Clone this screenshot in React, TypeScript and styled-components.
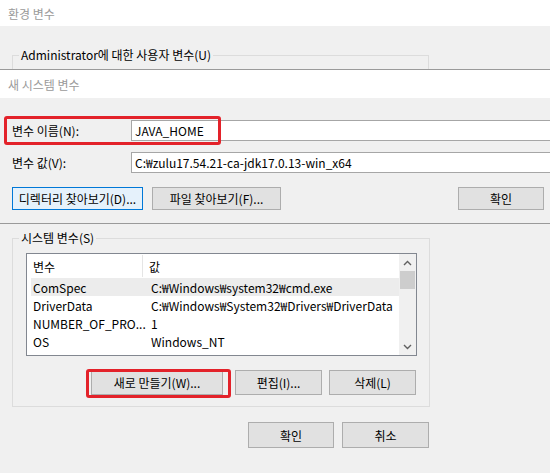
import React from "react";
import styled, { createGlobalStyle } from "styled-components";

const Global = createGlobalStyle`
  html, body { margin: 0; padding: 0; background: #f0f0f0; }
  body {
    font-family: "Noto Sans CJK KR", "Noto Sans", sans-serif;
    font-size: 12px;
    color: #000;
  }
  * { box-sizing: border-box; }
`;

const Screen = styled.div`
  position: relative;
  width: 550px;
  height: 473px;
  overflow: hidden;
  display: flex;
  flex-direction: column;
  background: #f0f0f0;
`;

const TitleBar = styled.div<{ $h: number }>`
  flex-shrink: 0;
  height: ${(p) => p.$h}px;
  background: #fff;
  color: #9a9a9a;
  display: flex;
  align-items: center;
  padding-left: 8px;
  font-size: 12px;
`;

const TopStrip = styled.div`
  flex-shrink: 0;
  height: 43px;
  overflow: hidden;
  padding: 21px 0 0 12px;
`;

const GroupBox = styled.fieldset<{ $w: number; $h: number }>`
  margin: 0;
  width: ${(p) => p.$w}px;
  height: ${(p) => p.$h}px;
  border: 1px solid #dcdcdc;
  padding: 0 0 0 6px;
  min-width: 0;
`;

const Legend = styled.legend`
  padding: 0 2px;
  line-height: 16px;
  font-size: 12px;
`;

const Dialog = styled.section`
  flex-shrink: 0;
  border-top: 1px solid #9a9a9a;
  border-bottom: 1px solid #9a9a9a;
  display: flex;
  flex-direction: column;
`;

const DialogBody = styled.div`
  position: relative;
  height: 125px;
  overflow: hidden;
  padding: 22px 0 0 12px;
  display: flex;
  flex-direction: column;
`;

const FieldRow = styled.div<{ $mt: number }>`
  display: flex;
  align-items: center;
  height: 21px;
  margin-top: ${(p) => p.$mt}px;
`;

const FieldLabel = styled.label`
  width: 119px;
  flex-shrink: 0;
  white-space: nowrap;
`;

const TextBox = styled.div`
  flex-shrink: 0;
  width: 440px;
  height: 21px;
  background: #fff;
  border: 1px solid #a6a6a6;
  display: flex;
  align-items: center;
  padding-left: 3px;
  white-space: nowrap;
`;

const ButtonRow = styled.div<{ $mt: number; $pr: number }>`
  display: flex;
  align-items: center;
  margin-top: ${(p) => p.$mt}px;
  padding-right: ${(p) => p.$pr}px;
`;

const Button = styled.button<{ $w: number; $h: number; $focus?: boolean; $ml?: number; $auto?: boolean }>`
  flex-shrink: 0;
  width: ${(p) => p.$w}px;
  height: ${(p) => p.$h}px;
  margin: 0;
  margin-left: ${(p) => (p.$auto ? "auto" : `${p.$ml ?? 0}px`)};
  padding: 0;
  font: inherit;
  color: #000;
  background: ${(p) => (p.$focus ? "#e5f1fb" : "#e1e1e1")};
  border: 1px solid ${(p) => (p.$focus ? "#0078d7" : "#adadad")};
  border-radius: 0;
  white-space: nowrap;
`;

const Highlight = styled.div<{ $x: number; $y: number; $w: number; $h: number }>`
  position: absolute;
  left: ${(p) => p.$x}px;
  top: ${(p) => p.$y}px;
  width: ${(p) => p.$w}px;
  height: ${(p) => p.$h}px;
  border: 3px solid #e3222a;
  border-radius: 3px;
  pointer-events: none;
`;

const Lower = styled.div`
  flex: 1;
  display: flex;
  flex-direction: column;
  padding: 6px 0 0 12px;
`;

const GroupInner = styled.div`
  display: flex;
  flex-direction: column;
  padding: 7px 0 0 7px;
`;

const ListView = styled.div`
  width: 391px;
  height: 103px;
  border: 1px solid #828790;
  background: #fff;
  display: flex;
  overflow: hidden;
`;

const Table = styled.div`
  flex: 1;
  display: flex;
  flex-direction: column;
  overflow: hidden;
`;

const HeaderRow = styled.div`
  flex-shrink: 0;
  display: grid;
  grid-template-columns: 116px 1fr;
  height: 24px;
  align-items: stretch;
`;

const HeaderCell = styled.div<{ $divider?: boolean }>`
  display: flex;
  align-items: center;
  padding-left: 6px;
  border-right: ${(p) => (p.$divider ? "1px solid #e5e5e5" : "none")};
  margin: 1px 0;
`;

const Row = styled.div<{ $selected?: boolean }>`
  flex-shrink: 0;
  display: grid;
  grid-template-columns: 118px 1fr;
  height: 18px;
  margin-left: 4px;
  align-items: center;
  background: ${(p) => (p.$selected ? "#ececec" : "transparent")};
  white-space: nowrap;
`;

const Cell = styled.div`
  padding-left: 2px;
  overflow: hidden;
  white-space: nowrap;
`;

const ScrollBar = styled.div`
  width: 17px;
  flex-shrink: 0;
  background: #f0f0f0;
  display: flex;
  flex-direction: column;
`;

const ScrollArrow = styled.div`
  height: 17px;
  display: flex;
  align-items: center;
  justify-content: center;
  flex-shrink: 0;
`;

const Track = styled.div`
  flex: 1;
  display: flex;
  flex-direction: column;
`;

const Thumb = styled.div`
  height: 18px;
  margin: 0 1px;
  background: #cdcdcd;
`;

const Chevron = ({ up }: { up?: boolean }) => (
  <svg width="9" height="6" viewBox="0 0 9 6">
    <path
      d={up ? "M1 5 L4.5 1.5 L8 5" : "M1 1 L4.5 4.5 L8 1"}
      fill="none"
      stroke="#606060"
      strokeWidth="1.4"
    />
  </svg>
);

const rows = [
  ["ComSpec", "C:\u20A9Windows\u20A9system32\u20A9cmd.exe"],
  ["DriverData", "C:\u20A9Windows\u20A9System32\u20A9Drivers\u20A9DriverData"],
  ["NUMBER_OF_PRO...", "1"],
  ["OS", "Windows_NT"],
];

export default function App() {
  return (
    <>
      <Global />
      <Screen>
        <TitleBar $h={26}>환경 변수</TitleBar>
        <TopStrip>
          <GroupBox $w={417} $h={120}>
            <Legend>Administrator에 대한 사용자 변수(U)</Legend>
          </GroupBox>
        </TopStrip>

        <Dialog>
          <TitleBar $h={28}>새 시스템 변수</TitleBar>
          <DialogBody>
            <FieldRow $mt={0}>
              <FieldLabel>변수 이름(N):</FieldLabel>
              <TextBox>JAVA_HOME</TextBox>
            </FieldRow>
            <FieldRow $mt={11}>
              <FieldLabel>변수 값(V):</FieldLabel>
              <TextBox>C:₩zulu17.54.21-ca-jdk17.0.13-win_x64</TextBox>
            </FieldRow>
            <ButtonRow $mt={14} $pr={6}>
              <Button $w={131} $h={23} $focus>
                디렉터리 찾아보기(D)...
              </Button>
              <Button $w={129} $h={23} $ml={9}>
                파일 찾아보기(F)...
              </Button>
              <Button $w={86} $h={23} $auto>
                확인
              </Button>
            </ButtonRow>
            <Highlight $x={4} $y={18} $w={217} $h={29} />
          </DialogBody>
        </Dialog>

        <Lower>
          <GroupBox $w={418} $h={177}>
            <Legend>시스템 변수(S)</Legend>
            <GroupInner>
              <ListView>
                <Table>
                  <HeaderRow>
                    <HeaderCell $divider>변수</HeaderCell>
                    <HeaderCell>값</HeaderCell>
                  </HeaderRow>
                  {rows.map((r, i) => (
                    <Row key={r[0]} $selected={i === 0}>
                      <Cell>{r[0]}</Cell>
                      <Cell>{r[1]}</Cell>
                    </Row>
                  ))}
                </Table>
                <ScrollBar>
                  <ScrollArrow>
                    <Chevron up />
                  </ScrollArrow>
                  <Track>
                    <Thumb />
                  </Track>
                  <ScrollArrow>
                    <Chevron />
                  </ScrollArrow>
                </ScrollBar>
              </ListView>
              <ButtonRow $mt={14} $pr={0}>
                <Button $w={132} $h={25} $ml={65}>
                  새로 만들기(W)...
                </Button>
                <Button $w={87} $h={25} $ml={12}>
                  편집(I)...
                </Button>
                <Button $w={87} $h={25} $ml={7}>
                  삭제(L)
                </Button>
              </ButtonRow>
            </GroupInner>
          </GroupBox>
          <ButtonRow $mt={15} $pr={121}>
            <Button $w={86} $h={26} $auto>
              확인
            </Button>
            <Button $w={87} $h={26} $ml={8}>
              취소
            </Button>
          </ButtonRow>
        </Lower>
        <Highlight $x={86} $y={369} $w={145} $h={29} />
      </Screen>
    </>
  );
}
